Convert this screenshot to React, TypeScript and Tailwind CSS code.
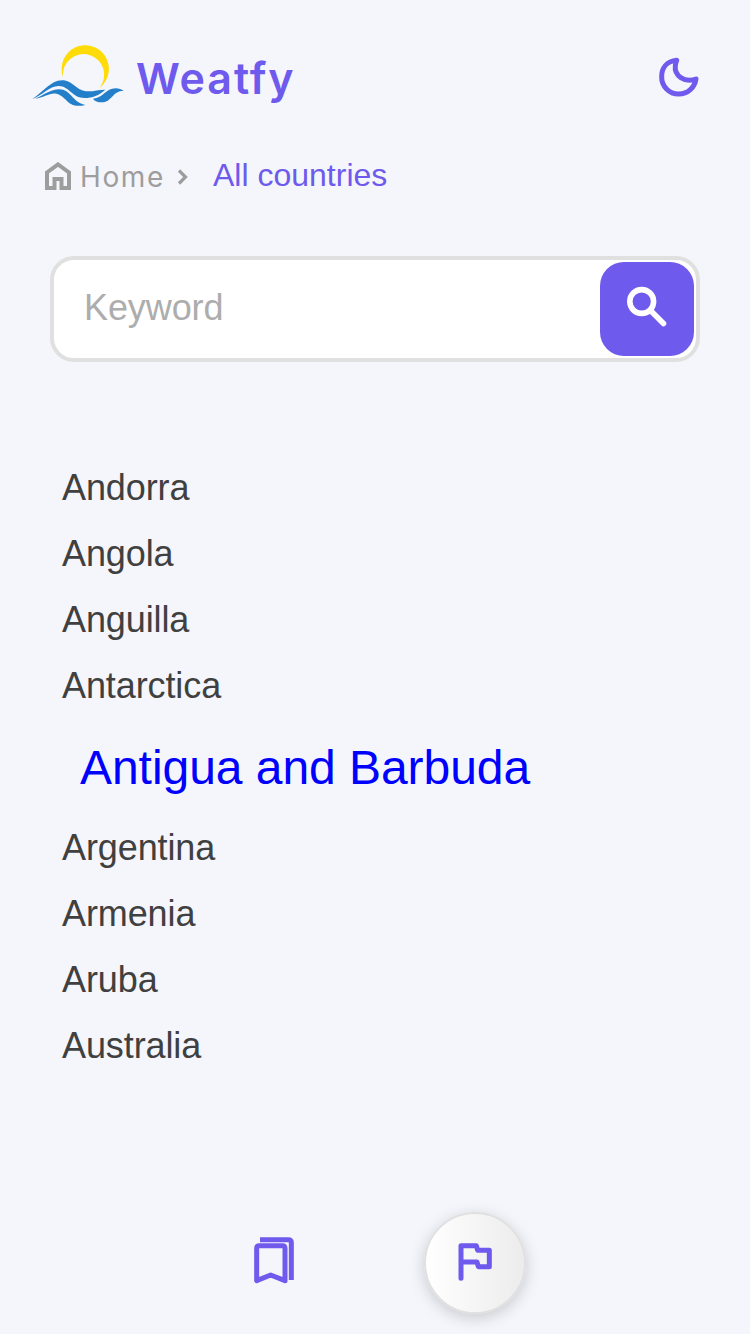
const before = ['Andorra', 'Angola', 'Anguilla', 'Antarctica'];
const after = ['Argentina', 'Armenia', 'Aruba', 'Australia'];

function Logo() {
  return (
    <svg className="h-[80px] w-[120px] shrink-0" viewBox="0 0 360 240">
      <path d="M129 126A71 71 0 1 1 239 158A62 62 0 1 0 129 126Z" fill="#ffdc08" />
      <path d="M37 192C66 175 92 136 126 136c34 0 42 33 78 33 19 0 32-5 52-5-20 17-38 25-62 25-38 0-46-36-78-36-28 0-50 29-79 39Z" fill="#247fcb" />
      <path d="M45 191c22-7 40-26 70-28 37-2 41 39 81 47-55 13-56-29-88-34-20-3-37 13-63 15Z" fill="#247fcb" />
      <path d="M219 191c31-1 37-31 68-31 10 0 17 3 24 7-35 1-35 35-66 35-12 0-21-3-26-11Z" fill="#247fcb" />
    </svg>
  );
}

function CountryRow({ name }: { name: string }) {
  return <li className="flex h-[66px] items-center pl-3 text-[36px] leading-[40px] tracking-[-0.1px] text-[#404040]">{name}</li>;
}

export default function App() {
  return (
    <div className="flex h-[1334px] w-[750px] flex-col overflow-hidden bg-[#f4f6fb] font-['Liberation_Sans',sans-serif]">
      <header className="flex h-[115px] items-end pl-5 pr-[30px]">
        <Logo />
        <h1 className="-ml-[4px] mb-[10px] font-['Inter',sans-serif] text-[43px] font-semibold leading-[54px] tracking-[1.9px] text-[#6e5aec]">Weatfy</h1>
        <button aria-label="Dark mode" className="mb-[5px] ml-auto h-[70px] w-[80px]">
          <svg viewBox="0 0 240 210" fill="none" stroke="#6e5aec" strokeWidth="15" strokeLinejoin="round" strokeLinecap="round">
            <path d="M110 61C80 64 65 84 65 110a51 51 0 0 0 51 52c28 0 48-20 52-45-35 12-66-10-62-40q1-8 4-16Z" />
          </svg>
        </button>
      </header>

      <nav className="mt-[34px] flex h-[52px] items-center pl-[45px]">
        <svg className="h-[28px] w-[26px] translate-y-px" viewBox="0 0 26 28" fill="none" stroke="#9d9d9d" strokeWidth="4">
          <path d="M2 26V10.5L13 2.4l11 8.1V26h-7.5V17h-7v9Z" />
        </svg>
        <span className="ml-[9px] mt-[3px] w-[85px] whitespace-nowrap font-['Inter',sans-serif] text-[28px] tracking-[1.6px] text-[#9d9d9d]">Home</span>
        <svg className="ml-[12px] mt-[4px] h-[16px] w-[11px]" viewBox="0 0 11 16" fill="none" stroke="#9d9d9d" strokeWidth="3.2">
          <path d="m2 1.5 6.5 6.5L2 14.5" />
        </svg>
        <span className="ml-[25px] text-[32px] leading-[38px] text-[#6e5aec]">All countries</span>
      </nav>

      <form className="mx-[50px] mt-[55px] flex h-[106px] shrink-0 items-center rounded-[24px] border-4 border-[#e0e0e0] bg-white pr-[2px]">
        <input placeholder="Keyword" className="min-w-0 flex-1 bg-transparent pb-[2px] pl-[30px] text-[36px] leading-[42px] tracking-[-0.1px] outline-none placeholder:text-[#adadad]" />
        <button type="button" aria-label="Search" className="flex h-[94px] w-[94px] items-center justify-center rounded-[24px] bg-[#6e5aec]">
          <svg className="h-[94px] w-[94px]" viewBox="0 0 94 94" fill="none" stroke="#fff" strokeWidth="5.6" strokeLinecap="round">
            <circle cx="41.7" cy="39.5" r="11.9" />
            <path d="m50.5 48.5 13 13" />
          </svg>
        </button>
      </form>

      <ul className="mx-[50px] mt-[93px] flex flex-col">
        {before.map((name) => <CountryRow key={name} name={name} />)}
        <li className="flex h-[96px] items-center pl-[30px] pt-[2px] text-[48px] leading-[54px] tracking-[-0.05px] text-[#0000ff]">Antigua and Barbuda</li>
        {after.map((name) => <CountryRow key={name} name={name} />)}
      </ul>

      <footer className="mb-[20px] mt-auto flex h-[102px] shrink-0 items-center pl-[225px]">
        <button aria-label="Bookmarks" className="mb-[6px] flex h-[100px] w-[100px] items-center justify-center">
          <svg className="h-[80px] w-[80px]" viewBox="0 0 240 240" fill="none" stroke="#6e5aec" strokeWidth="15" strokeLinejoin="round">
            <path d="M65 85q0-8 8-8h69q8 0 8 8v97l-43-17-42 17Z" />
            <path d="M75 59h85q9 0 9 9v112" />
          </svg>
        </button>
        <button aria-label="Countries" className="ml-[99px] flex h-[102px] w-[102px] items-center justify-center rounded-full border-2 border-[#e0e0e0] bg-linear-to-r from-white to-[#ececec] shadow-[0_4px_16px_rgba(0,0,0,0.18)]">
          <svg className="h-[98px] w-[98px]" viewBox="48 42 294 294" fill="none" stroke="#6e5aec" strokeWidth="15" strokeLinejoin="round" strokeLinecap="round">
            <path d="M153 235v-98h46l4 14h35v49h-33l-4-14h-48" />
          </svg>
        </button>
      </footer>
    </div>
  );
}
